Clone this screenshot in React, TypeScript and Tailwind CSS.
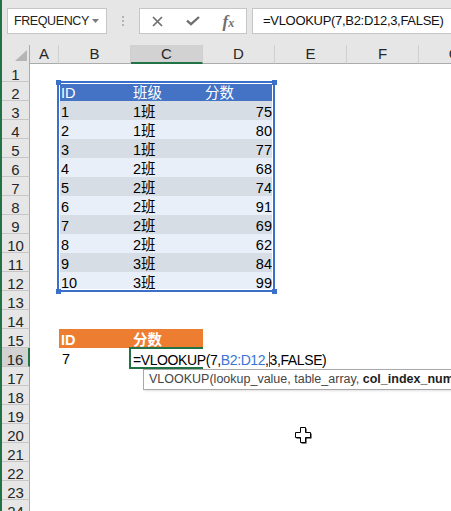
import React from "react";

const COLS = ["A", "B", "C", "D", "E", "F", "G"];
const GRID = "grid grid-cols-[28px_29px_72px_72px_72px_72px_72px_72px]";

const scores: [number, string, number][] = [
  [1, "1班", 75],
  [2, "1班", 80],
  [3, "1班", 77],
  [4, "2班", 68],
  [5, "2班", 74],
  [6, "2班", 91],
  [7, "2班", 69],
  [8, "2班", 62],
  [9, "3班", 84],
  [10, "3班", 99],
];

function Toolbar() {
  return (
    <div className="flex h-[45px] shrink-0 items-start bg-[#e6e6e6] pl-[5px] pt-[8px]">
      {/* Name box */}
      <div className="flex h-[26px] w-[100px] shrink-0 items-center justify-between border border-[#c6c6c6] bg-white pl-[6px] pr-[7px]">
        <span className="text-[12.5px] tracking-[-0.4px] text-[#222]">FREQUENCY</span>
        <svg width="7" height="4" viewBox="0 0 7 4">
          <path d="M0 0H7L3.5 4Z" fill="#7a7a7a" />
        </svg>
      </div>

      {/* Grip dots */}
      <div className="flex h-[26px] w-[32px] shrink-0 flex-col items-center justify-center gap-[2px]">
        <div className="h-[2px] w-[2px] bg-[#b3b3b3]" />
        <div className="h-[2px] w-[2px] bg-[#b3b3b3]" />
        <div className="h-[2px] w-[2px] bg-[#b3b3b3]" />
      </div>

      {/* Cancel / enter / fx */}
      <div className="grid h-[26px] w-[108px] shrink-0 grid-cols-3 items-center justify-items-center border border-[#c6c6c6] bg-white">
        <svg width="11" height="11" viewBox="0 0 11 11">
          <path d="M1 1L10 10M10 1L1 10" stroke="#6f6f6f" strokeWidth="1.7" />
        </svg>
        <svg width="14" height="10" viewBox="0 0 14 10">
          <path d="M1 4.6L5 8.2L13 1" stroke="#6f6f6f" strokeWidth="2.3" fill="none" />
        </svg>
        <span className="font-['Liberation_Serif',serif] text-[17px] font-bold italic leading-none text-[#6f6f6f]">
          f<span className="text-[12px]">x</span>
        </span>
      </div>

      {/* Formula */}
      <div className="ml-[5px] flex h-[26px] min-w-0 flex-1 items-center border border-r-0 border-[#c6c6c6] bg-white pl-[10px]">
        <span className="whitespace-nowrap text-[13px] tracking-[-0.3px] text-[#111]">=VLOOKUP(7,B2:D12,3,FALSE)</span>
      </div>
    </div>
  );
}

function cellFor(row: number, col: number): { cls: string; content: React.ReactNode } {
  const base = "h-[19px] whitespace-nowrap overflow-hidden pt-[4px] leading-[15px] text-[14.5px]";
  if (row === 2 && col >= 1 && col <= 3) {
    const labels = ["ID", "班级", "分数"];
    return { cls: `${base} bg-[#4472c4] pl-[2px] text-white`, content: labels[col - 1] };
  }
  if (row >= 3 && row <= 12 && col >= 1 && col <= 3) {
    const item = scores[row - 3];
    const fill = row % 2 === 1 ? "bg-[#d7dde5]" : "bg-[#e9eff8]";
    if (col === 3) return { cls: `${base} ${fill} pr-[3px] text-right`, content: item[2] };
    return { cls: `${base} ${fill} pl-[2px]`, content: col === 1 ? item[0] : item[1] };
  }
  if (row === 15 && (col === 1 || col === 2)) {
    return { cls: `${base} bg-[#ed7d31] pl-[2px] font-bold text-white`, content: col === 1 ? "ID" : "分数" };
  }
  if (row === 16 && col === 1) return { cls: `${base} pl-[3px]`, content: 7 };
  if (row === 16 && col === 2) {
    return {
      cls: "relative z-10 h-[19px] whitespace-nowrap overflow-visible pl-[2px] pt-[4px] leading-[15px] text-[14px] tracking-[-0.4px]",
      content: (
        <>
          =VLOOKUP(7,<span className="text-[#3a74d4]">B2:D12</span>,
          <span className="inline-block h-[15px] w-px bg-[#555] align-[-2px]" />
          3,FALSE)
        </>
      ),
    };
  }
  return { cls: base, content: null };
}

function Sheet() {
  const rows = Array.from({ length: 24 }, (_, i) => i + 1);
  return (
    <div className="min-w-0 flex-1 overflow-hidden">
      {/* Column headers */}
      <div className={`${GRID} h-[18px] bg-[#e6e6e6]`}>
        <div className="flex items-end justify-end border-b border-r border-[#ababab] pb-[2px] pr-[2px]">
          <svg width="12" height="11" viewBox="0 0 12 11">
            <path d="M12 0V11H0Z" fill="#b5b5b5" />
          </svg>
        </div>
        {COLS.map((c) =>
          c === "C" ? (
            <div
              key={c}
              className="border-b-2 border-r border-b-[#217346] border-r-[#cfcfcf] bg-[#d2d2d2] pt-[1px] text-center text-[15px] leading-[16px] text-[#262626]"
            >
              {c}
            </div>
          ) : (
            <div
              key={c}
              className="border-b border-r border-b-[#ababab] border-r-[#cfcfcf] pt-[1px] text-center text-[15px] leading-[16px] text-[#262626]"
            >
              {c}
            </div>
          )
        )}
      </div>

      {/* Rows */}
      <div className={`${GRID} auto-rows-[19px]`}>
        {rows.map((r) => (
          <React.Fragment key={r}>
            {r === 16 ? (
              <div className="h-[19px] border-b border-r-2 border-b-[#c6c6c6] border-r-[#217346] bg-[#d2d2d2] pt-[4px] text-center text-[15px] leading-[15px] text-[#262626]">
                {r}
              </div>
            ) : (
              <div className="h-[19px] border-b border-r border-b-[#c6c6c6] border-r-[#ababab] bg-[#e6e6e6] pt-[4px] text-center text-[15px] leading-[15px] text-[#262626]">
                {r}
              </div>
            )}
            {COLS.map((_, ci) => {
              const cell = cellFor(r, ci);
              return (
                <div key={ci} className={cell.cls}>
                  {cell.content}
                </div>
              );
            })}
          </React.Fragment>
        ))}
      </div>
    </div>
  );
}

export default function App() {
  return (
    <div className="relative h-[511px] w-[451px] overflow-hidden bg-white font-['Liberation_Sans','Noto_Sans_CJK_SC',sans-serif] text-black">
      <div className="flex h-full">
        <div className="w-[2px] shrink-0 bg-[#217346]" />
        <div className="flex min-w-0 flex-1 flex-col">
          <Toolbar />
          <Sheet />
        </div>
      </div>

      {/* Referenced range highlight B2:D12 */}
      <div className="pointer-events-none absolute left-[57px] top-[81px] h-[211px] w-[218px] border-2 border-[#3a6fca]">
        <div className="absolute inset-0 border border-white" />
      </div>
      <div className="absolute left-[56px] top-[80px] h-[5px] w-[5px] bg-[#3a6fca]" />
      <div className="absolute left-[272px] top-[80px] h-[5px] w-[5px] bg-[#3a6fca]" />
      <div className="absolute left-[56px] top-[289px] h-[5px] w-[5px] bg-[#3a6fca]" />
      <div className="absolute left-[272px] top-[289px] h-[5px] w-[5px] bg-[#3a6fca]" />

      {/* Active cell C16 */}
      <div className="pointer-events-none absolute left-[129px] top-[347px] h-[22px] w-[74px] border-2 border-r-0 border-[#217346]" />

      {/* Function tooltip */}
      <div className="absolute left-[143px] top-[369px] h-[21px] w-[330px] whitespace-nowrap border border-[#a9a9a9] bg-white pl-[5px] text-[12.5px] leading-[19px] text-[#444] shadow-[1px_1px_2px_rgba(0,0,0,0.12)]">
        VLOOKUP(lookup_value, table_array, <span className="font-bold text-[#222]">col_index_num</span>, [range_lookup])
      </div>

      {/* Cell cursor */}
      <svg className="absolute left-[295px] top-[427px]" width="18" height="18" viewBox="0 0 18 18">
        <path d="M6.5 1.5H11.5V6.5H16.5V11.5H11.5V16.5H6.5V11.5H1.5V6.5H6.5Z" fill="#000" />
        <path d="M5.5 0.5H10.5V5.5H15.5V10.5H10.5V15.5H5.5V10.5H0.5V5.5H5.5Z" fill="#fff" stroke="#000" strokeWidth="1" />
      </svg>
    </div>
  );
}
